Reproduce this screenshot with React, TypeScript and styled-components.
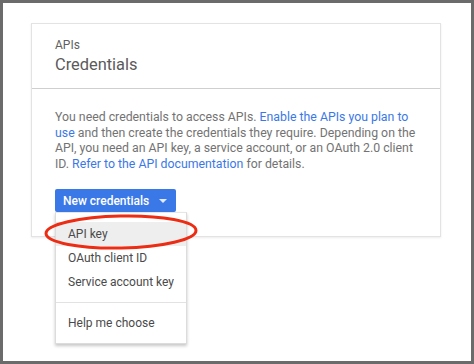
import React from "react";
import styled, { createGlobalStyle } from "styled-components";

const GlobalStyle = createGlobalStyle`
  html, body { margin: 0; padding: 0; background: #ffffff; }
  body { font-family: Roboto, "Liberation Sans", Arial, sans-serif; -webkit-font-smoothing: antialiased; }
  * { box-sizing: border-box; }
`;

const Frame = styled.div`
  width: 474px;
  height: 364px;
  border: 3px solid #6b6b6b;
  background: #ffffff;
  padding: 20px 30px 0 28px;
`;

const Card = styled.section`
  width: 410px;
  border: 1px solid #e3e3e3;
  box-shadow: 0 1px 2px rgba(0, 0, 0, 0.08);
  background: #ffffff;
`;

const CardHeader = styled.header`
  height: 65px;
  padding: 14px 23px 0;
  border-bottom: 1px solid #cfcfcf;
`;

const Eyebrow = styled.div`
  font-size: 12px;
  line-height: 14px;
  color: #5f5f5f;
  margin-bottom: 3px;
`;

const Title = styled.h1`
  margin: 0;
  font-size: 16.4px;
  line-height: 19px;
  font-weight: 400;
  color: #5a5a5a;
`;

const CardBody = styled.div`
  padding: 21px 23px 24px;
`;

const Description = styled.p`
  margin: 0 0 17px;
  font-size: 12.3px;
  line-height: 15.6px;
  color: #737373;
  width: 364px;
`;

const Link = styled.a`
  color: #3b78e7;
  text-decoration: none;
`;

const ButtonWrap = styled.div`
  position: relative;
  display: inline-block;
  vertical-align: top;
`;

const PrimaryButton = styled.button`
  display: flex;
  align-items: center;
  height: 23px;
  width: 121px;
  padding: 0 0 0 8px;
  border: none;
  border-radius: 2px;
  background: #3b78e7;
  color: #ffffff;
  font-family: inherit;
  font-size: 12px;
  font-weight: 500;
  cursor: pointer;
`;

const Caret = styled.span`
  display: inline-block;
  margin-left: 10px;
  width: 0;
  height: 0;
  border-left: 4px solid transparent;
  border-right: 4px solid transparent;
  border-top: 4px solid rgba(255, 255, 255, 0.85);
`;

const Menu = styled.ul`
  position: absolute;
  top: 100%;
  left: 0;
  z-index: 2;
  width: 132px;
  margin: 0;
  padding: 9px 0 8px;
  list-style: none;
  background: #ffffff;
  border: 1px solid #dcdcdc;
  border-top-color: #e6e6e6;
  box-shadow: 0 2px 3px rgba(0, 0, 0, 0.22);
`;

const MenuItem = styled.li<{ $active?: boolean }>`
  height: 24px;
  line-height: 24px;
  padding-left: 12px;
  font-size: 12px;
  color: #4a4a4a;
  white-space: nowrap;
  background: ${(p) => (p.$active ? "#eeeeee" : "transparent")};
`;

const MenuDivider = styled.li`
  height: 1px;
  margin: 8px 0;
  background: #e2e2e2;
`;

const Highlight = styled.svg`
  position: absolute;
  left: -11px;
  top: 25px;
  width: 154px;
  height: 36px;
  z-index: 3;
  pointer-events: none;
  overflow: visible;
`;

export default function App() {
  return (
    <>
      <GlobalStyle />
      <Frame>
        <Card>
          <CardHeader>
            <Eyebrow>APIs</Eyebrow>
            <Title>Credentials</Title>
          </CardHeader>
          <CardBody>
            <Description>
              You need credentials to access APIs.{" "}
              <Link href="#">Enable the APIs you plan to use</Link> and then create the
              credentials they require. Depending on the API, you need an API key, a
              service account, or an OAuth 2.0 client ID.{" "}
              <Link href="#">Refer to the API documentation</Link> for details.
            </Description>
            <ButtonWrap>
              <PrimaryButton>
                New credentials
                <Caret />
              </PrimaryButton>
              <Menu>
                <MenuItem $active>API key</MenuItem>
                <MenuItem>OAuth client ID</MenuItem>
                <MenuItem>Service account key</MenuItem>
                <MenuDivider />
                <MenuItem>Help me choose</MenuItem>
              </Menu>
              <Highlight viewBox="0 0 154 36">
                <ellipse
                  cx="77"
                  cy="18"
                  rx="75"
                  ry="16"
                  fill="none"
                  stroke="#ec2d14"
                  strokeWidth="3"
                  transform="rotate(-1.2 77 18)"
                />
              </Highlight>
            </ButtonWrap>
          </CardBody>
        </Card>
      </Frame>
    </>
  );
}
